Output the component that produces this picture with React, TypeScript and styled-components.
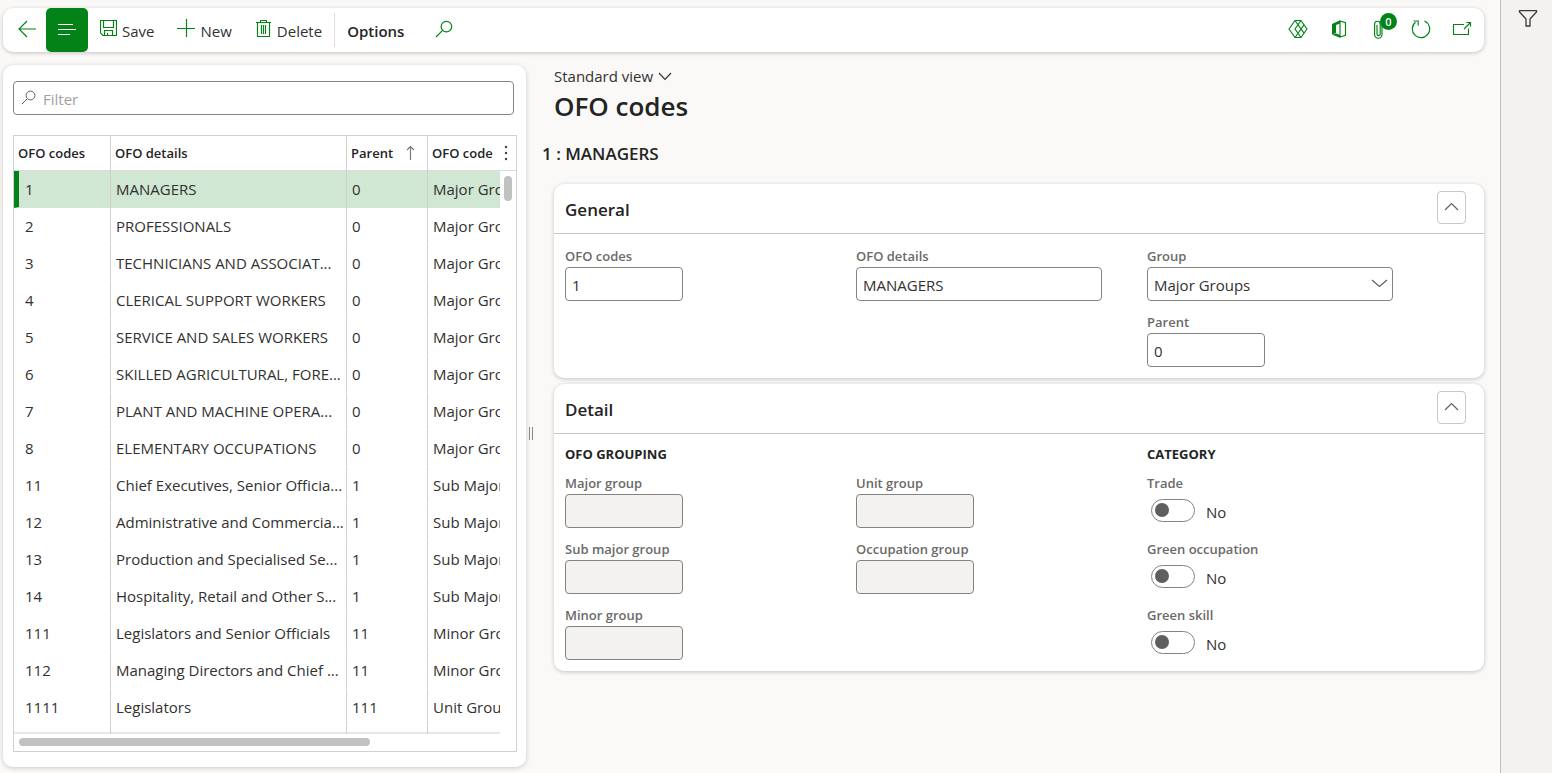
import React from "react";
import styled, { createGlobalStyle } from "styled-components";

const color = {
  green: "#038317",
  text: "#323130",
  strong: "#242424",
  label: "#6b6a68",
  field: "#85837f",
  line: "#d2d0ce",
  page: "#faf9f8",
  rail: "#f3f2f1",
  selected: "#cfe7d3",
  thumb: "#c1c1c1",
};

const GlobalStyle = createGlobalStyle`
  *, *::before, *::after { box-sizing: border-box; }
  body {
    margin: 0;
    background: ${color.page};
    color: ${color.text};
    font-family: "Open Sans", "Noto Sans", sans-serif;
    font-size: 15px;
    line-height: 20px;
  }
  button, input, select { font: inherit; color: inherit; }
  h1, h2, h3 { margin: 0; }
`;

const Page = styled.div`
  display: flex;
  min-height: 100vh;
`;

const Workspace = styled.div`
  flex: 1;
  min-width: 0;
  display: flex;
  flex-direction: column;
  padding: 8px 16px 6px 3px;
`;

const FilterRail = styled.aside`
  width: 52px;
  flex: none;
  border-left: 1px solid #c0bebc;
  background: ${color.rail};
  padding: 8px 0 0 17px;
`;

const IconButton = styled.button`
  display: flex;
  border: 0;
  padding: 0;
  background: none;
  cursor: pointer;
  color: ${color.green};
`;

const Toolbar = styled.header`
  display: flex;
  align-items: center;
  height: 44px;
  padding: 0 12px 0 14px;
  border-radius: 10px;
  background: #fff;
  box-shadow: 0 1px 4px rgba(0, 0, 0, 0.22);

  svg { margin-bottom: 2px; }
`;

const MenuButton = styled.button`
  display: grid;
  place-items: center;
  width: 42px;
  height: 44px;
  margin: 0 12px 0 9px;
  padding: 0;
  border: 0;
  border-radius: 5px;
  background: ${color.green};
  color: #fff;
`;

const Commands = styled.div`
  display: flex;
  gap: 23px;
  margin-right: 12px;
`;

const Command = styled.button`
  display: flex;
  align-items: center;
  gap: 5px;
  padding: 0;
  border: 0;
  background: none;

  svg { color: ${color.green}; margin-bottom: 4px; }
  span { padding-top: 2px; }
`;

const Options = styled.button`
  height: 34px;
  margin-right: 31px;
  padding: 2px 0 0 12px;
  border: 0;
  border-left: 1px solid #e1dfdd;
  background: none;
  color: ${color.strong};
  font-weight: 600;
`;

const Tools = styled.div`
  display: flex;
  gap: 21px;
  margin-left: auto;
`;

const Attachments = styled(IconButton)`
  position: relative;
`;

const Badge = styled.span`
  position: absolute;
  top: -6px;
  right: -7px;
  width: 17px;
  height: 17px;
  border-radius: 50%;
  background: ${color.green};
  color: #fff;
  font-size: 11px;
  line-height: 17px;
  font-weight: 600;
  text-align: center;
`;

const Content = styled.main`
  flex: 1;
  display: flex;
  align-items: flex-start;
  padding-top: 13px;
`;

const ListPanel = styled.section`
  width: 523px;
  flex: none;
  padding: 16px 10px 15px;
  border-radius: 10px;
  background: #fff;
  box-shadow: 0 1px 5px rgba(0, 0, 0, 0.2);
`;

const FilterBox = styled.label`
  display: flex;
  align-items: center;
  gap: 7px;
  height: 34px;
  margin: 0 2px 20px 0;
  padding: 0 7px;
  border: 1px solid ${color.field};
  border-radius: 4px;
  color: #605e5c;

  svg { margin-bottom: 2px; }

  input {
    flex: 1;
    min-width: 0;
    padding: 2px 0 0;
    border: 0;
    outline: 0;
    background: none;
  }
  input::placeholder { color: #a19f9d; opacity: 1; }
`;

const GridFrame = styled.div`
  margin-right: -1px;
  border: 1px solid ${color.line};
`;

const CodeTable = styled.table`
  width: 100%;
  table-layout: fixed;
  border-spacing: 0;
`;

const HeadCell = styled.th<{ $line?: boolean }>`
  height: 35px;
  padding: 0 0 0 4px;
  overflow: hidden;
  white-space: nowrap;
  text-align: left;
  font-size: 13px;
  font-weight: 600;
  color: ${color.strong};
  border-bottom: 1px solid #dddbd9;
  border-right: ${(p) => (p.$line ? `1px solid ${color.line}` : "0")};
`;

const SortLabel = styled.span`
  display: flex;
  align-items: center;
  justify-content: space-between;
  padding-right: 12px;

  svg { color: #797775; }
`;

const Row = styled.tr<{ $selected?: boolean }>`
  background: ${(p) => (p.$selected ? color.selected : "#fff")};

  td:first-child {
    padding-left: ${(p) => (p.$selected ? 6 : 11)}px;
    border-left: ${(p) => (p.$selected ? `5px solid ${color.green}` : "0")};
  }
`;

const Cell = styled.td<{ $line?: boolean; $selected?: boolean }>`
  height: 37px;
  padding: 0 0 0 5px;
  overflow: hidden;
  white-space: nowrap;
  border-bottom: 1px solid ${(p) => (p.$selected ? color.selected : "#fff")};
  border-right: ${(p) => (p.$line ? `1px solid ${color.line}` : "0")};
`;

const StubCell = styled.td<{ $line?: boolean }>`
  height: 8px;
  padding: 0;
  border-right: ${(p) => (p.$line ? `1px solid ${color.line}` : "0")};
  box-shadow: inset 0 -3px 2px -1px #e6e4e2;
`;

const ScrollCell = styled.td`
  padding: 5px 4px 0;
  background: #fff;
  vertical-align: top;
`;

const VerticalThumb = styled.div`
  width: 8px;
  height: 25px;
  border-radius: 4px;
  background: ${color.thumb};
`;

const HorizontalThumb = styled.div`
  width: 70%;
  height: 8px;
  margin: 4px 0 5px 5px;
  border-radius: 4px;
  background: ${color.thumb};
`;

const Splitter = styled.div`
  width: 16px;
  flex: none;
  align-self: center;
  padding: 34px 0 0 3px;

  &::before {
    content: "";
    display: block;
    width: 4px;
    height: 13px;
    border: solid #8a8886;
    border-width: 0 1px;
  }
`;

const Detail = styled.section`
  flex: 1;
  min-width: 0;
`;

const Heading = styled.div`
  padding-left: 12px;
`;

const ViewButton = styled.button`
  display: flex;
  align-items: center;
  gap: 5px;
  height: 22px;
  padding: 0;
  border: 0;
  background: none;
`;

const Title = styled.h1`
  color: ${color.strong};
  font-size: 26px;
  line-height: 38px;
  font-weight: 600;
`;

const RecordTitle = styled.h2`
  margin: 17px 0 18px;
  color: ${color.strong};
  font-size: 17px;
  line-height: 24px;
  font-weight: 600;
`;

const Card = styled.section`
  margin: 0 0 6px 12px;
  border-radius: 10px;
  background: #fff;
  box-shadow: 0 1px 4px rgba(0, 0, 0, 0.22);
`;

const CardHeader = styled.div`
  display: flex;
  align-items: center;
  justify-content: space-between;
  height: 50px;
  padding: 0 18px 2px 11px;
  border-bottom: 1px solid #c8c6c4;

  h2 {
    padding-top: 4px;
    color: ${color.strong};
    font-size: 17px;
    line-height: 24px;
    font-weight: 600;
  }
`;

const Collapse = styled.button`
  display: grid;
  place-items: center;
  width: 29px;
  height: 33px;
  padding: 0 0 2px;
  border: 1px solid #c8c6c4;
  border-radius: 4px;
  background: #fff;
  color: #605e5c;
`;

const FieldColumns = styled.div`
  display: grid;
  grid-template-columns: repeat(3, minmax(0, 1fr));
  padding: 12px 46px 11px 11px;
`;

const FieldColumn = styled.div`
  display: flex;
  flex-direction: column;
  gap: 11px;
`;

const GroupTitle = styled.h3`
  height: 16px;
  color: ${color.strong};
  font-size: 13px;
  line-height: 16px;
  font-weight: 700;
`;

const FieldBox = styled.div`
  display: flex;
  flex-direction: column;

  label {
    color: ${color.label};
    font-size: 13px;
    line-height: 21px;
    font-weight: 600;
  }
`;

const TextInput = styled.input<{ $wide?: boolean }>`
  width: ${(p) => (p.$wide ? 246 : 118)}px;
  max-width: 100%;
  height: 34px;
  padding: 1px 6px 0;
  border: 1px solid ${color.field};
  border-radius: 4px;
  background: #fff;

  &:disabled { background: ${color.rail}; }
`;

const SelectBox = styled.div`
  position: relative;
  width: 246px;
  max-width: 100%;

  select {
    width: 100%;
    height: 34px;
    padding: 1px 28px 0 6px;
    border: 1px solid ${color.field};
    border-radius: 4px;
    background: #fff;
    appearance: none;
  }
  svg {
    position: absolute;
    top: 12px;
    right: 5px;
    color: #605e5c;
    pointer-events: none;
  }
`;

const ToggleRow = styled.div`
  display: flex;
  align-items: center;
  gap: 11px;
  height: 34px;
  padding-left: 4px;

  input {
    width: 44px;
    height: 23px;
    margin: 0 0 2px;
    padding: 3px;
    border: 1px solid ${color.field};
    border-radius: 12px;
    background: #fff;
    appearance: none;
  }
  input::before {
    content: "";
    display: block;
    width: 14px;
    height: 14px;
    border-radius: 50%;
    background: #605e5c;
  }
  input:checked::before { margin-left: auto; }
  span { padding-top: 1px; }
`;

type IconProps = { w?: number; h?: number; children: React.ReactNode };

const Icon = ({ w = 20, h = 20, children }: IconProps) => (
  <svg
    width={w}
    height={h}
    viewBox={`0 0 ${w} ${h}`}
    fill="none"
    stroke="currentColor"
    strokeWidth="1.15"
    aria-hidden="true"
  >
    {children}
  </svg>
);

const Chevron = ({ up, w = 15 }: { up?: boolean; w?: number }) => (
  <Icon w={w} h={9}>
    <path d={up ? `M1 8L${w / 2} 1.5L${w - 1} 8` : `M1 1L${w / 2} 7.5L${w - 1} 1`} />
  </Icon>
);

const Magnifier = ({ w = 18 }: { w?: number }) => (
  <svg width={w} height={w} viewBox="0 0 18 18" fill="none" stroke="currentColor" strokeWidth="1.2" aria-hidden="true">
    <circle cx="11.4" cy="6.6" r="5.3" />
    <path d="M7.6 10.4L1 17" />
  </svg>
);

const rows = [
  ["1", "MANAGERS", "0", "Major Groups"],
  ["2", "PROFESSIONALS", "0", "Major Groups"],
  ["3", "TECHNICIANS AND ASSOCIAT...", "0", "Major Groups"],
  ["4", "CLERICAL SUPPORT WORKERS", "0", "Major Groups"],
  ["5", "SERVICE AND SALES WORKERS", "0", "Major Groups"],
  ["6", "SKILLED AGRICULTURAL, FORE...", "0", "Major Groups"],
  ["7", "PLANT AND MACHINE OPERA...", "0", "Major Groups"],
  ["8", "ELEMENTARY OCCUPATIONS", "0", "Major Groups"],
  ["11", "Chief Executives, Senior Officia...", "1", "Sub Major Groups"],
  ["12", "Administrative and Commercia...", "1", "Sub Major Groups"],
  ["13", "Production and Specialised Se...", "1", "Sub Major Groups"],
  ["14", "Hospitality, Retail and Other S...", "1", "Sub Major Groups"],
  ["111", "Legislators and Senior Officials", "11", "Minor Groups"],
  ["112", "Managing Directors and Chief ...", "11", "Minor Groups"],
  ["1111", "Legislators", "111", "Unit Groups"],
];

type FieldProps = { id: string; label: string; value?: string; wide?: boolean; disabled?: boolean };

const Field = ({ id, label, value = "", wide, disabled }: FieldProps) => (
  <FieldBox>
    <label htmlFor={id}>{label}</label>
    <TextInput id={id} defaultValue={value} $wide={wide} disabled={disabled} />
  </FieldBox>
);

const Toggle = ({ id, label }: { id: string; label: string }) => {
  const [on, setOn] = React.useState(false);
  return (
    <FieldBox>
      <label htmlFor={id}>{label}</label>
      <ToggleRow>
        <input id={id} type="checkbox" role="switch" checked={on} onChange={() => setOn(!on)} />
        <span>{on ? "Yes" : "No"}</span>
      </ToggleRow>
    </FieldBox>
  );
};

const Section = ({ title, children }: { title: string; children: React.ReactNode }) => {
  const [open, setOpen] = React.useState(true);
  return (
    <Card>
      <CardHeader>
        <h2>{title}</h2>
        <Collapse aria-label={`Toggle ${title}`} aria-expanded={open} onClick={() => setOpen(!open)}>
          <Chevron up={open} />
        </Collapse>
      </CardHeader>
      {open && <FieldColumns>{children}</FieldColumns>}
    </Card>
  );
};

const CommandBar = () => (
  <Toolbar>
    <IconButton aria-label="Back">
      <Icon>
        <path d="M19 10H2M10 2L2 10L10 18" />
      </Icon>
    </IconButton>
    <MenuButton aria-label="Show list">
      <Icon>
        <path d="M1 5.5H16M1 10.5H19M1 15.5H13" />
      </Icon>
    </MenuButton>
    <Commands>
      <Command>
        <Icon w={17} h={18}>
          <path d="M0.500 1.500H16.500V16.500H3L0.500 14Z" />
          <path d="M3.500 1.500V8.500H13.500V1.500M4.500 16.500V11.500H12.500V16.500M7.500 16.500V14" />
        </Icon>
        <span>Save</span>
      </Command>
      <Command>
        <Icon w={18} h={18}>
          <path d="M9.500 0V18M0 9.500H18" />
        </Icon>
        <span>New</span>
      </Command>
      <Command>
        <Icon w={17} h={18}>
          <path d="M1 3.500H16M5.500 3.500V1.500H11.500V3.500M2.500 3.500V17.500H14.500V3.500M6.500 6V15M8.500 6V15M10.500 6V15" />
        </Icon>
        <span>Delete</span>
      </Command>
    </Commands>
    <Options>Options</Options>
    <IconButton aria-label="Search">
      <Magnifier />
    </IconButton>
    <Tools>
      <IconButton aria-label="Power Apps">
        <Icon>
          <path d="M7 1.500H13L19 10L13 18.500H7L1 10Z" strokeLinejoin="round" />
          <path d="M13 1.500L7 10L13 18.500M7 1.500L16 14.200M7 18.500L16 5.800" />
        </Icon>
      </IconButton>
      <IconButton aria-label="Open in Microsoft Office">
        <Icon>
          <path d="M3 5L11 1.200V4.500L7 6V14L3 15.500Z" fill="currentColor" stroke="none" />
          <path d="M3 15.500L7 14.500L11 16V18.800Z" fill="currentColor" stroke="none" />
          <path d="M11 2L16.500 3.700V16.300L11 18Z" />
        </Icon>
      </IconButton>
      <Attachments aria-label="Attachments">
        <Icon>
          <path d="M12 7V15.500A3.700 3.700 0 0 1 4.600 15.500V5A2.800 2.800 0 0 1 10.200 5V15A1.600 1.600 0 0 1 7 15V6" />
        </Icon>
        <Badge>0</Badge>
      </Attachments>
      <IconButton aria-label="Refresh">
        <Icon>
          <path d="M13.500 2A8.700 8.700 0 1 1 4.500 3.200" />
          <path d="M2.500 2H7.200V6.500" />
        </Icon>
      </IconButton>
      <IconButton aria-label="Open in new window">
        <Icon>
          <path d="M12 5.500H1.500V15.500H16.500V9.500" />
          <path d="M12 10L18.500 3.500M14.500 3.500H18.500V7.500" />
        </Icon>
      </IconButton>
    </Tools>
  </Toolbar>
);

const CodeList = () => (
  <ListPanel aria-label="OFO codes list">
    <FilterBox>
      <Magnifier w={15} />
      <input placeholder="Filter" aria-label="Filter" />
    </FilterBox>
    <GridFrame>
      <CodeTable>
        <colgroup>
          <col width="97" />
          <col />
          <col width="81" />
          <col width="72" />
          <col width="16" />
        </colgroup>
        <thead>
          <tr>
            <HeadCell $line>OFO codes</HeadCell>
            <HeadCell $line>OFO details</HeadCell>
            <HeadCell $line>
              <SortLabel>
                Parent
                <Icon w={9} h={16}>
                  <path d="M4.500 15V1.500M1 5L4.500 1.500L8 5" />
                </Icon>
              </SortLabel>
            </HeadCell>
            <HeadCell>OFO code</HeadCell>
            <HeadCell>
              <IconButton aria-label="Grid options">
                <svg width="4" height="16" viewBox="0 0 4 16" fill="#424242" aria-hidden="true">
                  <circle cx="2" cy="2" r="1.200" />
                  <circle cx="2" cy="8" r="1.200" />
                  <circle cx="2" cy="14" r="1.200" />
                </svg>
              </IconButton>
            </HeadCell>
          </tr>
        </thead>
        <tbody>
          {rows.map(([code, details, parent, group], i) => (
            <Row key={code} $selected={i === 0}>
              <Cell $line $selected={i === 0}>{code}</Cell>
              <Cell $line $selected={i === 0}>{details}</Cell>
              <Cell $line $selected={i === 0}>{parent}</Cell>
              <Cell $selected={i === 0}>{group}</Cell>
              {i === 0 && (
                <ScrollCell rowSpan={rows.length + 1}>
                  <VerticalThumb />
                </ScrollCell>
              )}
            </Row>
          ))}
          <tr>
            <StubCell $line />
            <StubCell $line />
            <StubCell $line />
            <StubCell />
          </tr>
        </tbody>
      </CodeTable>
      <HorizontalThumb />
    </GridFrame>
  </ListPanel>
);

export default function App() {
  return (
    <Page>
      <GlobalStyle />
      <Workspace>
        <CommandBar />
        <Content>
          <CodeList />
          <Splitter role="separator" aria-orientation="vertical" />
          <Detail>
            <Heading>
              <ViewButton>
                Standard view
                <Chevron w={14} />
              </ViewButton>
              <Title>OFO codes</Title>
            </Heading>
            <RecordTitle>1 : MANAGERS</RecordTitle>
            <Section title="General">
              <FieldColumn>
                <Field id="code" label="OFO codes" value="1" />
              </FieldColumn>
              <FieldColumn>
                <Field id="details" label="OFO details" value="MANAGERS" wide />
              </FieldColumn>
              <FieldColumn>
                <FieldBox>
                  <label htmlFor="group">Group</label>
                  <SelectBox>
                    <select id="group" defaultValue="Major Groups">
                      <option>Major Groups</option>
                    </select>
                    <Chevron w={17} />
                  </SelectBox>
                </FieldBox>
                <Field id="parent" label="Parent" value="0" />
              </FieldColumn>
            </Section>
            <Section title="Detail">
              <FieldColumn>
                <GroupTitle>OFO GROUPING</GroupTitle>
                <Field id="major" label="Major group" disabled />
                <Field id="sub" label="Sub major group" disabled />
                <Field id="minor" label="Minor group" disabled />
              </FieldColumn>
              <FieldColumn>
                <GroupTitle aria-hidden="true" />
                <Field id="unit" label="Unit group" disabled />
                <Field id="occupation" label="Occupation group" disabled />
              </FieldColumn>
              <FieldColumn>
                <GroupTitle>CATEGORY</GroupTitle>
                <Toggle id="trade" label="Trade" />
                <Toggle id="green-occupation" label="Green occupation" />
                <Toggle id="green-skill" label="Green skill" />
              </FieldColumn>
            </Section>
          </Detail>
        </Content>
      </Workspace>
      <FilterRail>
        <IconButton aria-label="Show filters">
          <svg width="20" height="20" viewBox="0 0 20 20" fill="none" stroke="#3b3a39" strokeWidth="1.300" aria-hidden="true">
            <path d="M1.500 2.700H18.500V4L12 11V18H8V11L1.500 4Z" />
          </svg>
        </IconButton>
      </FilterRail>
    </Page>
  );
}
